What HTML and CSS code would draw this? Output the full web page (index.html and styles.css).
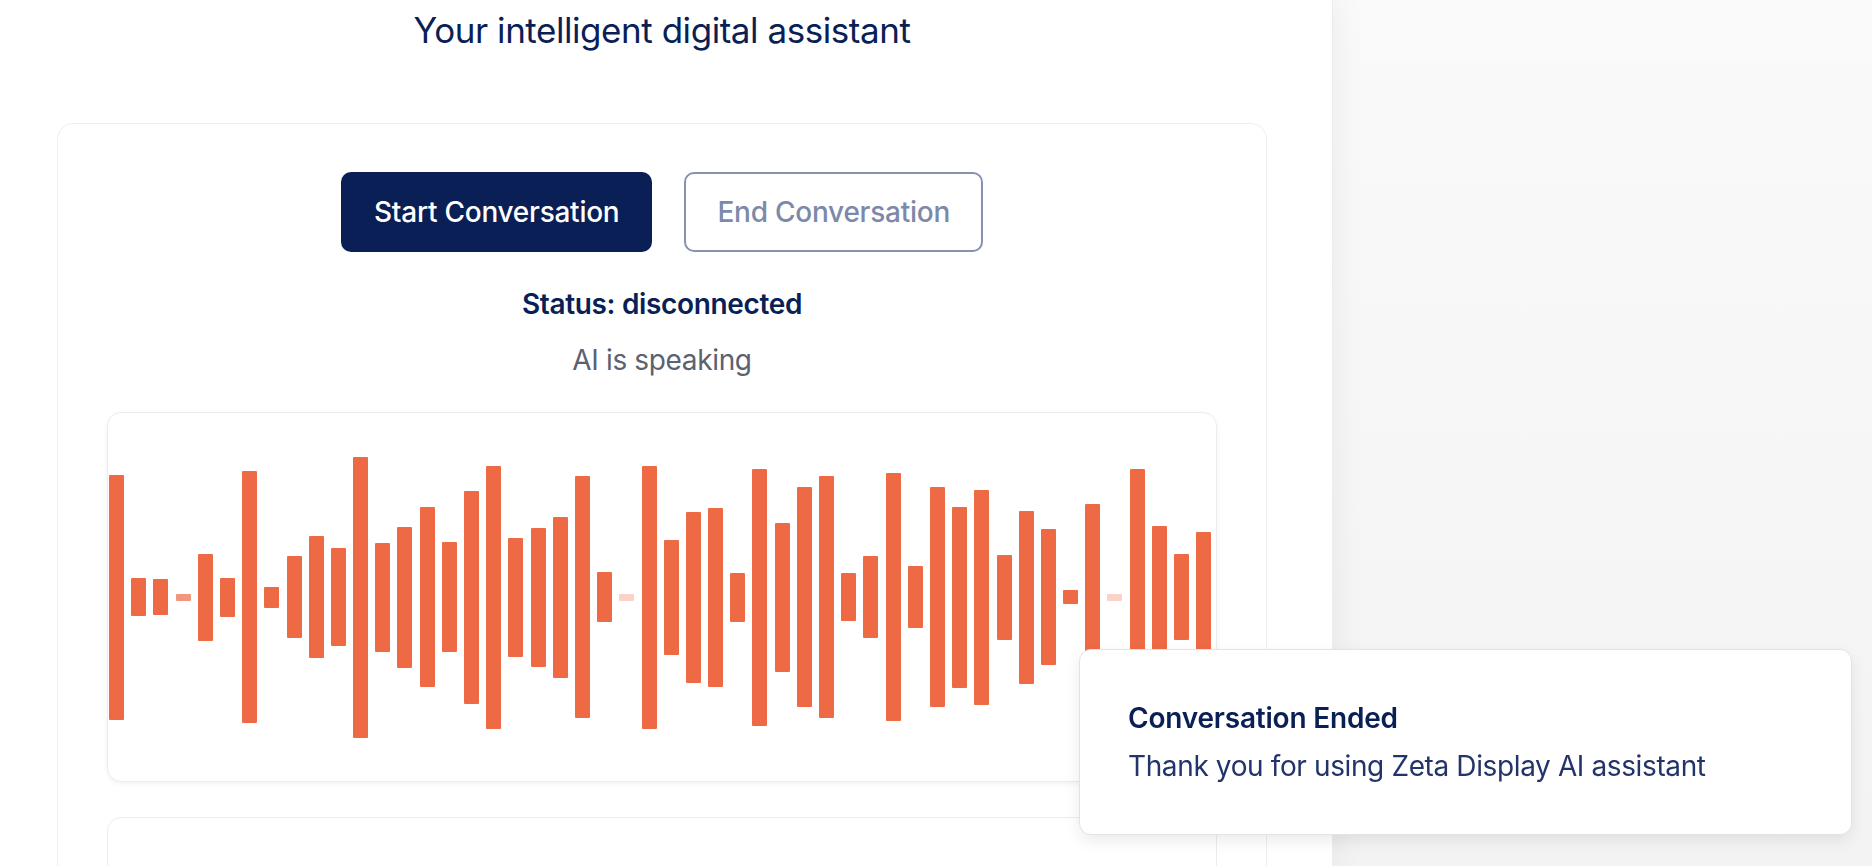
FILE: index.html
```html
<!DOCTYPE html>
<html lang="en">
<head>
<meta charset="utf-8">
<title>Zeta Display AI assistant</title>
<link rel="stylesheet" href="styles.css">
</head>
<body>
<div class="layout">
  <main class="panel">
    <h2 class="subtitle">Your intelligent digital assistant</h2>
    <section class="card">
      <div class="actions">
        <button class="btn btn-primary">Start Conversation</button>
        <button class="btn btn-outline">End Conversation</button>
      </div>
      <p class="status">Status: disconnected</p>
      <p class="speaking">AI is speaking</p>
      <div class="wave-card">
        <div class="wave">
          <span class="bar" style="height:245px"></span>
          <span class="bar" style="height:38px"></span>
          <span class="bar" style="height:36px"></span>
          <span class="bar faint" style="height:7px"></span>
          <span class="bar" style="height:87px"></span>
          <span class="bar" style="height:39px"></span>
          <span class="bar" style="height:252px"></span>
          <span class="bar" style="height:21px"></span>
          <span class="bar" style="height:82px"></span>
          <span class="bar" style="height:122px"></span>
          <span class="bar" style="height:98px"></span>
          <span class="bar" style="height:281px"></span>
          <span class="bar" style="height:109px"></span>
          <span class="bar" style="height:141px"></span>
          <span class="bar" style="height:180px"></span>
          <span class="bar" style="height:110px"></span>
          <span class="bar" style="height:213px"></span>
          <span class="bar" style="height:263px"></span>
          <span class="bar" style="height:119px"></span>
          <span class="bar" style="height:139px"></span>
          <span class="bar" style="height:161px"></span>
          <span class="bar" style="height:242px"></span>
          <span class="bar" style="height:50px"></span>
          <span class="bar ghost" style="height:7px"></span>
          <span class="bar" style="height:263px"></span>
          <span class="bar" style="height:115px"></span>
          <span class="bar" style="height:171px"></span>
          <span class="bar" style="height:179px"></span>
          <span class="bar" style="height:49px"></span>
          <span class="bar" style="height:257px"></span>
          <span class="bar" style="height:149px"></span>
          <span class="bar" style="height:220px"></span>
          <span class="bar" style="height:242px"></span>
          <span class="bar" style="height:48px"></span>
          <span class="bar" style="height:82px"></span>
          <span class="bar" style="height:248px"></span>
          <span class="bar" style="height:62px"></span>
          <span class="bar" style="height:220px"></span>
          <span class="bar" style="height:181px"></span>
          <span class="bar" style="height:215px"></span>
          <span class="bar" style="height:85px"></span>
          <span class="bar" style="height:173px"></span>
          <span class="bar" style="height:136px"></span>
          <span class="bar" style="height:14px"></span>
          <span class="bar" style="height:187px"></span>
          <span class="bar ghost" style="height:7px"></span>
          <span class="bar" style="height:257px"></span>
          <span class="bar" style="height:143px"></span>
          <span class="bar" style="height:86px"></span>
          <span class="bar" style="height:130px"></span>
        </div>
      </div>
      <div class="transcript-card"></div>
    </section>
  </main>
  <aside class="side"></aside>
</div>

<div class="toast" role="status">
  <div class="toast-title">Conversation Ended</div>
  <div class="toast-desc">Thank you for using Zeta Display AI assistant</div>
</div>
</body>
</html>
```

FILE: styles.css
```css
* { box-sizing: border-box; }

html, body {
  margin: 0;
  height: 866px;
  overflow: hidden;
}

body {
  font-family: Inter, "Noto Sans", "Liberation Sans", sans-serif;
  color: #0a1f55;
  background: #f7f7f7;
}

.layout {
  display: flex;
  height: 866px;
}

.panel {
  width: 1333px;
  flex: none;
  background: #ffffff;
  padding: 6px 65px 0 57px;
  border-right: 1px solid #ededed;
  box-shadow: 6px 0 28px rgba(0, 0, 0, 0.05);
  position: relative;
  z-index: 1;
}

.side {
  flex: 1;
  background: linear-gradient(180deg, #fafafa 0%, #f3f3f3 100%);
}

.subtitle {
  margin: 0;
  font-size: 35px;
  line-height: 49px;
  font-weight: 400;
  letter-spacing: -0.45px;
  text-align: center;
  color: #0a1f55;
}

.card {
  margin-top: 68px;
  border: 1px solid #eeeeee;
  border-radius: 16px;
  padding: 48px 49px 0;
  background: #ffffff;
  display: flex;
  flex-direction: column;
  align-items: stretch;
  height: 900px;
}

.actions {
  display: flex;
  justify-content: center;
  gap: 32px;
}

.btn {
  font-family: inherit;
  font-size: 28px;
  font-weight: 500;
  line-height: 42px;
  letter-spacing: -0.25px;
  height: 80px;
  padding: 0 31px;
  border-radius: 10px;
  border: 2px solid transparent;
  cursor: pointer;
}

.btn-primary {
  background: #0a1f55;
  border-color: #0a1f55;
  color: #ffffff;
}

.btn-outline {
  background: #ffffff;
  border-color: #8692b0;
  color: #7c89a8;
}

.status {
  margin: 31px 0 0;
  text-align: center;
  font-size: 28px;
  line-height: 42px;
  font-weight: 600;
  letter-spacing: -0.35px;
  color: #0a1f55;
}

.speaking {
  margin: 14px 0 0;
  text-align: center;
  font-size: 28px;
  line-height: 42px;
  font-weight: 400;
  letter-spacing: -0.35px;
  color: #5b6170;
}

.wave-card {
  margin-top: 31px;
  height: 370px;
  border: 1px solid #ececec;
  border-radius: 14px;
  background: #ffffff;
  box-shadow: 0 2px 5px rgba(0, 0, 0, 0.05);
  display: flex;
  align-items: center;
  padding-left: 1px;
  flex: none;
}

.wave {
  display: flex;
  align-items: center;
  gap: 7.2px;
}

.bar {
  display: block;
  width: 15px;
  background: #ee6a45;
  border-radius: 1px;
  flex: none;
}

.bar.faint { opacity: 0.7; }
.bar.ghost { opacity: 0.3; }

.transcript-card {
  margin-top: 35px;
  height: 300px;
  border: 1px solid #ececec;
  border-radius: 14px;
  background: #ffffff;
  flex: none;
}

.toast {
  position: fixed;
  right: 20px;
  bottom: 31px;
  width: 773px;
  padding: 47px 48px;
  background: #ffffff;
  border: 1px solid #e3e3e3;
  border-radius: 12px;
  box-shadow: 0 6px 16px rgba(0, 0, 0, 0.08);
  z-index: 10;
}

.toast-title {
  font-size: 28px;
  line-height: 42px;
  font-weight: 600;
  letter-spacing: -0.2px;
  color: #0a1f55;
}

.toast-desc {
  margin-top: 6px;
  font-size: 28px;
  line-height: 42px;
  font-weight: 400;
  letter-spacing: -0.38px;
  color: #22346a;
}
```
